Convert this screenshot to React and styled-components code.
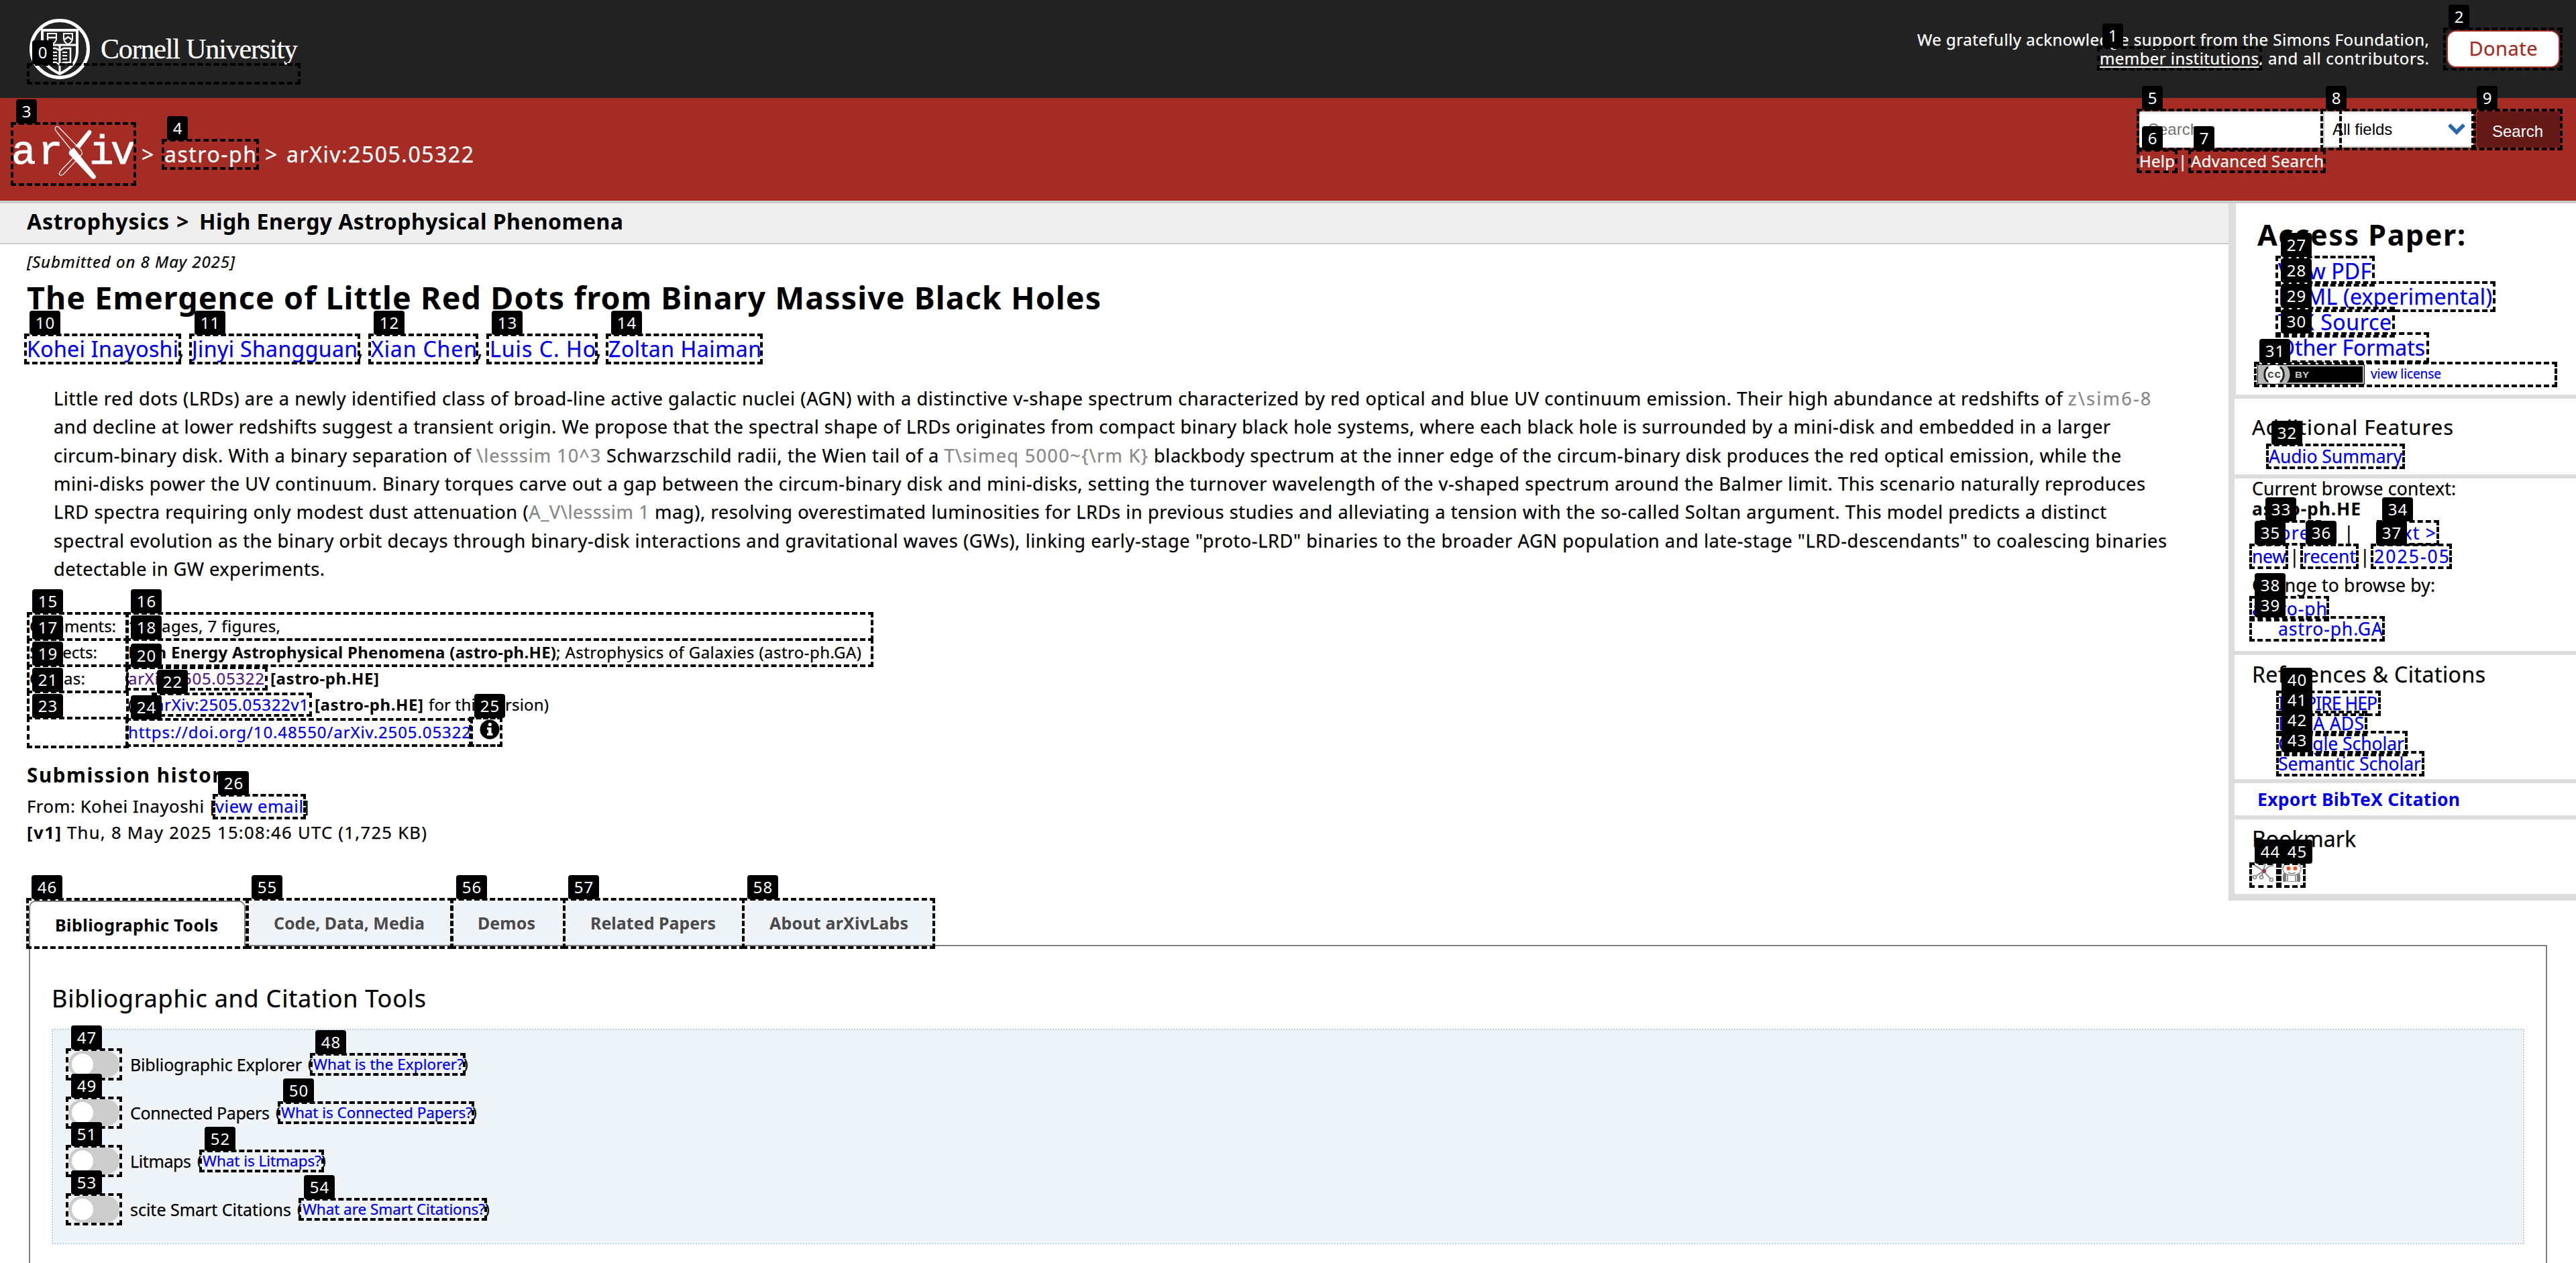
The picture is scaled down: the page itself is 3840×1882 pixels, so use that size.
import React, { useLayoutEffect, useRef, useState } from 'react';
import styled, { createGlobalStyle } from 'styled-components';

const Global = createGlobalStyle`
  * { box-sizing: border-box; }
  html, body { margin: 0; padding: 0; background: #fff; }
  body { font-family: "Noto Sans", "Open Sans", sans-serif; color: #000; overflow: hidden; }
`;

/* ---------- text ---------- */

const Run = styled.span`
  display: inline-block;
  flex: none;
  white-space: pre;
  margin-left: ${(p) => p.$ml || 0}px;
  font-weight: ${(p) => (p.$bold ? 700 : 'inherit')};
  color: ${(p) => p.$color || 'inherit'};
  text-decoration: ${(p) => (p.$underline ? 'underline' : 'none')};
  text-decoration-thickness: 2px;
  text-underline-offset: 3px;
  font-style: ${(p) => (p.$italic ? 'italic' : 'inherit')};
  -webkit-text-stroke: ${(p) => (p.$bold ? 0 : 0.25)}px currentColor;
`;

/* Text tracked so that it fills a given measure. */
function Fit({ w, ml, bold, color, underline, italic, children }) {
  const ref = useRef(null);
  const [tracking, setTracking] = useState(0);
  useLayoutEffect(() => {
    const el = ref.current;
    el.style.width = 'auto';
    el.style.letterSpacing = '0px';
    const plain = el.getBoundingClientRect().width;
    el.style.letterSpacing = '1px';
    const slope = Math.max(1, el.getBoundingClientRect().width - plain - 1);
    const next = (w - plain) / slope;
    el.style.width = `${w}px`;
    el.style.letterSpacing = `${next}px`;
    setTracking(next);
  }, [w]);
  return (
    <Run
      ref={ref}
      $ml={ml}
      $bold={bold}
      $color={color}
      $underline={underline}
      $italic={italic}
      style={{ width: w, letterSpacing: tracking }}
    >
      {children}
    </Run>
  );
}

const BLUE = '#0000ee';

const Line = styled.div`
  display: flex;
  margin-top: ${(p) => p.$gap || 0}px;
  padding-left: ${(p) => p.$indent || 0}px;
  height: ${(p) => p.$h}px;
  line-height: ${(p) => p.$h}px;
  font-size: ${(p) => p.$s}px;
`;

const Tex = styled.span`
  color: #888;
  letter-spacing: ${(p) => p.$track}px;
`;

/* ---------- page ---------- */

const Page = styled.div`
  position: relative;
  width: 3840px;
  height: 1882px;
  overflow: hidden;
  background: #fff;
`;

const TopBar = styled.header`
  display: flex;
  justify-content: space-between;
  align-items: center;
  height: 146px;
  padding: 0 24px 0 40px;
  background: #222;
  color: #fff;
`;

const CornellMark = styled.div`
  display: flex;
  align-items: center;
  font-family: "Liberation Serif", serif;
  font-size: 42px;
  line-height: 48px;
  padding-left: 3px;
`;

const Support = styled.div`
  display: flex;
  align-items: center;
  gap: 26px;
`;

const Thanks = styled.div`
  display: flex;
  flex-direction: column;
  align-items: flex-end;
`;

const ThanksLine = styled.div`
  display: flex;
  height: 28px;
  line-height: 28px;
  font-size: 24px;
`;

const Donate = styled.button`
  display: flex;
  align-items: center;
  justify-content: center;
  width: 169px;
  height: 56px;
  padding: 0 0 4px;
  border: 2px solid #a42c25;
  border-radius: 14px;
  background: #fff;
  color: #a42c25;
  font: inherit;
  font-size: 29px;
`;

const RedBar = styled.div`
  display: flex;
  justify-content: space-between;
  height: 157px;
  padding: 20px 24px 0 18px;
  background: #a42c25;
  border-bottom: 4px solid #ccc;
  color: #fff;
`;

const Crumbs = styled.div`
  display: flex;
  height: 100px;
  margin-top: 14px;
  font-size: 32px;
  line-height: 100px;
`;

const CrumbText = styled.div`
  display: flex;
`;

const SearchArea = styled.div`
  width: 627px;
  font-size: 24px;
`;

const SearchRow = styled.div`
  display: flex;
  height: 54px;
  font-family: "Liberation Sans", Arial, sans-serif;
`;

const Field = styled.div`
  width: 274px;
  padding-left: 13px;
  line-height: 53px;
  background: #fff;
  color: #757575;
  border-radius: 4px 0 0 4px;
  box-shadow: inset 0 3px 3px #e6e6e6;
`;

const Picker = styled.div`
  display: flex;
  align-items: center;
  justify-content: space-between;
  width: 224px;
  padding: 2px 12px 0 12px;
  line-height: 50px;
  background: #fff;
  color: #000;
  border-left: 2px solid #ccc;
  border-bottom: 2px solid #ccc;
  box-shadow: inset 0 3px 3px #e6e6e6;
`;

const SearchButton = styled.button`
  width: 124px;
  margin-left: 5px;
  padding: 6px 2px 0 0;
  border: 0;
  border-radius: 4px;
  background: #661a17;
  color: #fff;
  font: inherit;
`;

const Columns = styled.div`
  display: flex;
  height: 1039px;
`;

const Main = styled.main`
  width: 3322px;
`;

const Subject = styled.div`
  height: 61px;
  padding-left: 40px;
  background: #eee;
  border-bottom: 2px solid #ccc;
`;

const Article = styled.article`
  padding-left: 40px;
`;

const Abstract = styled.div`
  margin-top: 33px;
  padding-left: 40px;
`;

const MetaTable = styled.div`
  margin-top: 44px;
  padding-left: 4px;
`;

const MetaRow = styled.div`
  display: grid;
  grid-template-columns: 147px 1fr;
  height: ${(p) => p.$h}px;
  line-height: ${(p) => p.$h}px;
  font-size: 24px;
`;

const MetaCell = styled.div`
  display: flex;
`;

const Sidebar = styled.aside`
  width: 518px;
  background: #fff;
`;

const Section = styled.section`
  display: flow-root;
  height: ${(p) => p.$h}px;
  padding-left: ${(p) => (p.$wide ? 32 : 26)}px;
  border-left: ${(p) => (p.$wide ? 11 : 9)}px solid #ddd;
  border-bottom: ${(p) => p.$rule || 6}px solid #ddd;
`;

const LinkList = styled.div`
  margin-top: ${(p) => p.$gap}px;
  padding-left: ${(p) => p.$indent}px;
`;

const License = styled.div`
  display: flex;
  margin-top: 6px;
  height: 29px;
  line-height: 28px;
  font-size: 19px;
`;

const IconRow = styled.div`
  display: flex;
  gap: 11px;
  margin-top: 12px;
`;

/* ---------- labs ---------- */

const Labs = styled.div`
  margin: 0 43px;
`;

const Tabs = styled.div`
  display: flex;
  gap: 4px;
  height: 68px;
  border-bottom: 2px solid #808080;
  font-size: 25px;
`;

const Tab = styled.div`
  flex: none;
  display: flex;
  width: ${(p) => p.$w}px;
  height: ${(p) => (p.$active ? 68 : 66)}px;
  line-height: ${(p) => (p.$active ? 68 : 66)}px;
  padding-left: 37px;
  background: ${(p) => (p.$active ? '#fff' : '#eff4f9')};
  color: ${(p) => (p.$active ? '#000' : '#4a4a4a')};
  border: ${(p) => (p.$active ? '2px solid #808080' : '0')};
  border-bottom: 0;
  border-radius: 10px 10px 0 0;
  margin-right: ${(p) => (p.$active ? 1 : 0)}px;
`;

const Panel = styled.div`
  height: 520px;
  padding: 54px 32px 0;
  border: 2px solid #808080;
  border-top: 0;
`;

const ToolBox = styled.div`
  height: 321px;
  margin-top: 21px;
  padding: 15px 0 0 23px;
  border: 2px dotted #c5d5e0;
  background: #eff4f9;
`;

const ToolRow = styled.div`
  display: flex;
  align-items: center;
  height: 72px;
  line-height: 70px;
  font-size: 25px;
`;

const Small = styled.span`
  display: flex;
  font-size: 22.5px;
`;

const Toggle = styled.span`
  flex: none;
  width: 76px;
  height: 40px;
  padding: 4px 5px;
  margin-right: 16px;
  border-radius: 20px;
  background: #ccc;
  &::before {
    content: '';
    display: block;
    width: 32px;
    height: 32px;
    border-radius: 50%;
    background: #fff;
  }
`;

/* ---------- numbered element markers laid over the page ---------- */

const Outline = styled.div`
  position: absolute;
  left: ${(p) => p.$x}px;
  top: ${(p) => p.$y}px;
  width: ${(p) => p.$w}px;
  height: ${(p) => p.$h}px;
  border: 4px dashed #000;
`;

const Tag = styled.div`
  position: absolute;
  left: ${(p) => p.$x + 8}px;
  top: ${(p) => p.$y - 34}px;
  height: 36px;
  width: ${(p) => p.$w}px;
  text-align: center;
  line-height: 35px;
  font-size: 24px;
  letter-spacing: 1px;
  text-indent: 1px;
  background: #000;
  color: #fff;
  border-radius: 4px;
`;

const MARKS = [
  [40, 94, 448, 126], [3126, 69, 3372, 105], [3642, 41, 3820, 105], [16, 182, 203, 277],
  [241, 207, 386, 253], [3185, 162, 3491, 224], [3185, 222, 3246, 258], [3262, 222, 3467, 258],
  [3459, 162, 3691, 224], [3684, 162, 3820, 224], [36, 497, 270, 543], [282, 497, 537, 543],
  [549, 497, 713, 543], [725, 497, 891, 543], [903, 497, 1137, 543], [40, 912, 192, 955],
  [187, 912, 1302, 955], [40, 951, 192, 994], [187, 951, 1302, 994], [40, 990, 192, 1033],
  [187, 993, 399, 1029], [40, 1029, 192, 1072], [226, 1032, 465, 1068], [40, 1068, 192, 1115],
  [187, 1070, 705, 1113], [699, 1068, 749, 1113], [317, 1183, 456, 1221], [3392, 381, 3540, 427],
  [3392, 419, 3720, 465], [3392, 457, 3570, 503], [3392, 495, 3621, 541], [3360, 539, 3812, 577],
  [3378, 661, 3585, 699], [3369, 775, 3460, 813], [3543, 775, 3636, 813], [3353, 810, 3411, 848],
  [3429, 810, 3516, 848], [3534, 810, 3655, 848], [3353, 888, 3472, 926], [3353, 918, 3555, 956],
  [3393, 1029, 3549, 1067], [3393, 1059, 3529, 1097], [3393, 1089, 3589, 1127], [3393, 1119, 3614, 1157],
  [3353, 1285, 3401, 1323], [3393, 1285, 3437, 1323], [39, 1338, 370, 1414], [98, 1562, 182, 1610],
  [462, 1569, 694, 1603], [98, 1634, 182, 1682], [414, 1641, 707, 1675], [98, 1706, 182, 1754],
  [297, 1713, 483, 1747], [98, 1778, 182, 1826], [445, 1785, 726, 1819], [367, 1338, 675, 1414],
  [672, 1338, 843, 1414], [839, 1338, 1110, 1414], [1106, 1338, 1394, 1414],
];

function Markers() {
  return (
    <>
      {MARKS.map(([x, y, x2, y2], i) => (
        <Outline key={i} $x={x} $y={y} $w={x2 - x} $h={y2 - y} />
      ))}
      {MARKS.map(([x, y], i) => (
        <Tag key={i} $x={x} $y={y} $w={i > 9 ? 46 : 31}>
          {i}
        </Tag>
      ))}
    </>
  );
}

/* ---------- drawings ---------- */

const Seal = () => (
  <svg width="92" height="92" viewBox="0 0 92 92" fill="none" stroke="#fff">
    <circle cx="46" cy="46" r="42.5" strokeWidth="5" />
    <path d="M20 18H72V50C72 68 60 76 46 83C32 76 20 68 20 50Z" strokeWidth="4" />
    <path d="M20 40H72" strokeWidth="3" />
    <path d="M28 23H41V31C41 35 38 37 34.500 39C31 37 28 35 28 31ZM52 23H65V31C65 35 62 37 58.500 39C55 37 52 35 52 31Z" strokeWidth="2" />
    <path d="M28 29H41M53 32L58.500 28L64 32" strokeWidth="2.500" />
    <path d="M46 41V82" strokeWidth="3" />
    <path d="M30 45H40L46 48L52 45H62V66H52L46 69L40 66H30Z" strokeWidth="2.500" />
    <path d="M34 51H42M34 56H42M34 61H42M50 51H57M50 56H57M50 61H57" strokeWidth="2" />
  </svg>
);

const ArxivLogo = () => (
  <svg width="184" height="100" viewBox="18 178 184 100">
    <g fill="#fff" stroke="#fff" strokeWidth="0.900" fontFamily="Liberation Mono, monospace" fontSize="61">
      <text x="17" y="241.500">a</text>
      <text x="57" y="241.500">r</text>
      <text x="133" y="241.500">i</text>
      <text x="165" y="241.500">v</text>
    </g>
    <path d="M83 187.500C81 190 83 193 85 195L110 226L104 222L113 229L92 251C88 256 87 258 90 259C93 260 95 257 97 255L122 228C123 226 122 224 121 222L88 188C86 186 84 186 83 187.500Z" fill="none" stroke="#fff" strokeWidth="1.200" />
    <path d="M112 216L131 193C133 190 138 193 136 197L119 219Z" fill="#fff" />
    <path d="M104 223L110 218L142 259C145 263 140 267 136 263L105 230C102 227 102 225 104 223Z" fill="#fff" />
  </svg>
);

const Chevron = () => (
  <svg width="26" height="20" viewBox="0 0 26 20" fill="none" stroke="#2a67ab" strokeWidth="5.500">
    <path d="M2 3L13 14L24 3" />
  </svg>
);

const InfoIcon = styled.svg`
  width: 30px;
  height: 30px;
  margin-top: 3px;
`;

const Info = () => (
  <InfoIcon viewBox="0 0 30 30">
    <circle cx="15" cy="15" r="14.500" fill="#000" />
    <circle cx="15.300" cy="7.500" r="2.600" fill="#fff" />
    <path d="M11 12H17.500V20.500H19.500V24H11V20.500H13V15.500H11Z" fill="#fff" />
  </InfoIcon>
);

const CcBadge = () => (
  <svg width="160" height="30" viewBox="0 0 160 30">
    <rect width="160" height="30" fill="#000" />
    <rect x="2" y="2" width="156" height="26" fill="none" stroke="#bbb" strokeWidth="2" />
    <path d="M3 3H44C50 9 50 21 44 27H3Z" fill="#b3b8b0" />
    <circle cx="25" cy="15" r="14" fill="#fff" />
    <path d="M16 4C9 9 9 21 16 26M34 4C41 9 41 21 34 26" fill="none" stroke="#222" strokeWidth="3" />
    <text x="15" y="20" fontSize="17" fontWeight="700" fill="#444" fontFamily="Liberation Sans, sans-serif" textLength="20">cc</text>
    <text x="56" y="19.500" fontSize="13" fontWeight="700" fill="#ccc" fontFamily="Liberation Sans, sans-serif" textLength="21" lengthAdjust="spacingAndGlyphs">BY</text>
  </svg>
);

const BibSonomy = () => (
  <svg width="32" height="32" viewBox="0 0 32 32" fill="none" stroke="#999" strokeWidth="2.200">
    <path d="M17 16L2 6M17 16L20 3M17 16L28 7M17 16L5 24M17 16L14 24M17 16L28 28" />
    <circle cx="4" cy="25" r="2.500" />
    <circle cx="14" cy="25" r="2.500" />
    <circle cx="29" cy="29" r="2.500" />
    <circle cx="29" cy="6" r="2.500" />
    <circle cx="18" cy="16" r="3" fill="#a03060" stroke="none" />
  </svg>
);

const Reddit = () => (
  <svg width="34" height="32" viewBox="0 0 34 32">
    <path d="M7 18C5 22 5 27 6 32M25 18C27 22 27 27 26 32" stroke="#777" strokeWidth="5" fill="none" />
    <path d="M10 20V32H22V20" fill="#fff" stroke="#999" strokeWidth="2" />
    <circle cx="4" cy="8" r="3.500" fill="#ddd" stroke="#999" />
    <circle cx="30" cy="8" r="3.500" fill="#ddd" stroke="#999" />
    <ellipse cx="16.500" cy="13" rx="13.500" ry="9.500" fill="#fff" stroke="#999" strokeWidth="1.500" />
    <circle cx="11.500" cy="12" r="3" fill="#f0542a" />
    <circle cx="21.500" cy="12" r="3" fill="#f0542a" />
    <path d="M11 18Q16.500 22 22 18" stroke="#999" strokeWidth="2" fill="none" />
  </svg>
);

/* ---------- data ---------- */

const AUTHORS = [
  ['Kohei Inayoshi', 226, 0], ['Jinyi Shangguan', 247, 12], ['Xian Chen', 158, 12],
  ['Luis C. Ho', 158, 11], ['Zoltan Haiman', 228, 11],
];

const ABSTRACT = [
  [3128, <>Little red dots (LRDs) are a newly identified class of broad-line active galactic nuclei (AGN) with a distinctive v-shape spectrum characterized by red optical and blue UV continuum emission. Their high abundance at redshifts of <Tex $track={2.2}>z\sim6-8</Tex></>],
  [3066, 'and decline at lower redshifts suggest a transient origin. We propose that the spectral shape of LRDs originates from compact binary black hole systems, where each black hole is surrounded by a mini-disk and embedded in a larger'],
  [3082, <>circum-binary disk. With a binary separation of <Tex $track={1}>\lesssim 10^3</Tex> Schwarzschild radii, the Wien tail of a <Tex $track={1.3}>{'T\\simeq 5000~{\\rm K}'}</Tex> blackbody spectrum at the inner edge of the circum-binary disk produces the red optical emission, while the</>],
  [3118, 'mini-disks power the UV continuum. Binary torques carve out a gap between the circum-binary disk and mini-disks, setting the turnover wavelength of the v-shaped spectrum around the Balmer limit. This scenario naturally reproduces'],
  [3060, <>LRD spectra requiring only modest dust attenuation (<Tex $track={0.6}>A_V\lesssim 1</Tex> mag), resolving overestimated luminosities for LRDs in previous studies and alleviating a tension with the so-called Soltan argument. This model predicts a distinct</>],
  [3150, 'spectral evolution as the binary orbit decays through binary-disk interactions and gravitational waves (GWs), linking early-stage "proto-LRD" binaries to the broader AGN population and late-stage "LRD-descendants" to coalescing binaries'],
  [404, 'detectable in GW experiments.'],
];

const TABS = [
  ['Bibliographic Tools', 323, 243], ['Code, Data, Media', 300, 225], ['Demos', 164, 86],
  ['Related Papers', 263, 187], ['About arXivLabs', 280, 207],
];

const TOOLS = [
  ['Bibliographic Explorer', 256, 'What is the Explorer?', 224],
  ['Connected Papers', 208, 'What is Connected Papers?', 285],
  ['Litmaps', 91, 'What is Litmaps?', 177],
  ['scite Smart Citations', 240, 'What are Smart Citations?', 272],
];

const ACCESS = [['View PDF', 139], ['HTML (experimental)', 319], ['TeX Source', 169], ['Other Formats', 219]];
const REFS = [['INSPIRE HEP', 148], ['NASA ADS', 128], ['Google Scholar', 188], ['Semantic Scholar', 213]];

/* ---------- app ---------- */

export default function App() {
  return (
    <Page>
      <Global />
      <TopBar>
        <CornellMark>
          <Seal />
          <Fit ml={15} w={294}>Cornell University</Fit>
        </CornellMark>
        <Support>
          <Thanks>
            <ThanksLine><Fit w={763}>We gratefully acknowledge support from the Simons Foundation,</Fit></ThanksLine>
            <ThanksLine>
              <Fit w={237} underline>member institutions</Fit>
              <Fit w={254}>, and all contributors.</Fit>
            </ThanksLine>
          </Thanks>
          <Donate><Fit w={102}>Donate</Fit></Donate>
        </Support>
      </TopBar>

      <RedBar>
        <Crumbs>
          <ArxivLogo />
          <CrumbText>
            <Fit ml={9} w={22}>{'>'}</Fit>
            <Fit ml={12} w={137}>astro-ph</Fit>
            <Fit ml={13} w={22}>{'>'}</Fit>
            <Fit ml={10} w={279}>arXiv:2505.05322</Fit>
          </CrumbText>
        </Crumbs>
        <SearchArea>
          <SearchRow>
            <Field>Search</Field>
            <Picker>All fields<Chevron /></Picker>
            <SearchButton>Search</SearchButton>
          </SearchRow>
          <Line $gap={4} $h={32} $s={24}>
            <Fit w={53}>Help</Fit>
            <Fit ml={5} w={12}>|</Fit>
            <Fit ml={7} w={198}>Advanced Search</Fit>
          </Line>
        </SearchArea>
      </RedBar>

      <Columns>
        <Main>
          <Subject>
            <Line $h={53} $s={32}>
              <Fit bold w={212}>Astrophysics</Fit>
              <Fit bold ml={11} w={24}>{'>'}</Fit>
              <Fit bold ml={10} w={632}>High Energy Astrophysical Phenomena</Fit>
            </Line>
          </Subject>
          <Article>
            <Line $gap={11} $h={30} $s={24}><Fit italic w={310}>[Submitted on 8 May 2025]</Fit></Line>
            <Line $gap={10} $h={56} $s={46.5}>
              <Fit bold w={1601}>The Emergence of Little Red Dots from Binary Massive Black Holes</Fit>
            </Line>
            <Line $gap={29} $h={40} $s={32}>
              {AUTHORS.map(([name, w, ml], i) => (
                <React.Fragment key={name}>
                  <Fit color={BLUE} w={w} ml={ml}>{name}</Fit>
                  {i < 4 && <Fit w={8}>,</Fit>}
                </React.Fragment>
              ))}
            </Line>
            <Abstract>
              {ABSTRACT.map(([w, text], i) => (
                <Line key={i} $h={42.35} $s={27.2}><Fit w={w}>{text}</Fit></Line>
              ))}
            </Abstract>
            <MetaTable>
              <MetaRow $h={39}>
                <MetaCell><Fit w={129}>Comments:</Fit></MetaCell>
                <MetaCell><Fit w={227}>13 pages, 7 figures,</Fit></MetaCell>
              </MetaRow>
              <MetaRow $h={39}>
                <MetaCell><Fit w={101}>Subjects:</Fit></MetaCell>
                <MetaCell>
                  <Fit bold w={638}>High Energy Astrophysical Phenomena (astro-ph.HE)</Fit>
                  <Fit w={455}>; Astrophysics of Galaxies (astro-ph.GA)</Fit>
                </MetaCell>
              </MetaRow>
              <MetaRow $h={39}>
                <MetaCell><Fit w={83}>Cite as:</Fit></MetaCell>
                <MetaCell>
                  <Fit color="#551a8b" w={203}>arXiv:2505.05322</Fit>
                  <Fit bold ml={9} w={162}>[astro-ph.HE]</Fit>
                </MetaCell>
              </MetaRow>
              <MetaRow $h={39}>
                <MetaCell />
                <MetaCell>
                  <Fit w={32}>(or</Fit>
                  <Fit color={BLUE} ml={8} w={229}>arXiv:2505.05322v1</Fit>
                  <Fit bold ml={9} w={162}>[astro-ph.HE]</Fit>
                  <Fit ml={8} w={179}>for this version)</Fit>
                </MetaCell>
              </MetaRow>
              <MetaRow $h={43}>
                <MetaCell />
                <MetaCell>
                  <Fit color={BLUE} w={511}>https://doi.org/10.48550/arXiv.2505.05322</Fit>
                  <Fit w={13}> </Fit>
                  <Info />
                </MetaCell>
              </MetaRow>
            </MetaTable>
            <Line $gap={25} $h={36} $s={29.5}><Fit bold w={308}>Submission history</Fit></Line>
            <Line $gap={10} $h={38} $s={25.6}>
              <Fit w={264}>From: Kohei Inayoshi</Fit>
              <Fit ml={9} w={8}>[</Fit>
              <Fit color={BLUE} w={131}>view email</Fit>
              <Fit w={8}>]</Fit>
            </Line>
            <Line $gap={1} $h={38} $s={25.6}>
              <Fit bold w={51}>[v1]</Fit>
              <Fit ml={9} w={536}>Thu, 8 May 2025 15:08:46 UTC (1,725 KB)</Fit>
            </Line>
          </Article>
        </Main>

        <Sidebar>
          <Section $wide $h={291}>
            <Line $gap={17} $h={60} $s={43}><Fit bold w={310}>Access Paper:</Fit></Line>
            <LinkList $gap={5} $indent={31}>
              {ACCESS.map(([t, w]) => (
                <Line key={t} $h={38} $s={32}><Fit color={BLUE} w={w}>{t}</Fit></Line>
              ))}
            </LinkList>
            <License>
              <CcBadge />
              <Fit color={BLUE} ml={9} w={105}>view license</Fit>
            </License>
          </Section>
          <Section $h={119}>
            <Line $gap={24} $h={36} $s={31}><Fit w={300}>Additional Features</Fit></Line>
            <Line $gap={8} $indent={25} $h={36} $s={26.5}><Fit color={BLUE} w={199}>Audio Summary</Fit></Line>
          </Section>
          <Section $h={263}>
            <Line $gap={1} $h={29.5} $s={26.5}><Fit w={304}>Current browse context:</Fit></Line>
            <Line $h={29.5} $s={26.5}><Fit bold w={162}>astro-ph.HE</Fit></Line>
            <Line $gap={4} $indent={16} $h={35} $s={26.5}>
              <Fit color={BLUE} w={84}>{'< prev'}</Fit>
              <Fit ml={37} w={12}>|</Fit>
              <Fit color={BLUE} ml={42} w={83}>{'next >'}</Fit>
            </Line>
            <Line $h={35} $s={26.5}>
              <Fit color={BLUE} w={51}>new</Fit>
              <Fit ml={5} w={12}>|</Fit>
              <Fit color={BLUE} ml={8} w={79}>recent</Fit>
              <Fit ml={6} w={12}>|</Fit>
              <Fit color={BLUE} ml={9} w={112}>2025-05</Fit>
            </Line>
            <Line $gap={8} $h={35} $s={26.5}><Fit w={273}>Change to browse by:</Fit></Line>
            <Line $gap={2} $h={30} $s={26.5}><Fit color={BLUE} w={112}>astro-ph</Fit></Line>
            <Line $indent={39} $h={30} $s={26.5}><Fit color={BLUE} w={156}>astro-ph.GA</Fit></Line>
          </Section>
          <Section $h={191}>
            <Line $gap={9} $h={40} $s={32}><Fit w={348}>References & Citations</Fit></Line>
            <LinkList $gap={8} $indent={39}>
              {REFS.map(([t, w]) => (
                <Line key={t} $h={30} $s={26.5}><Fit color={BLUE} w={w}>{t}</Fit></Line>
              ))}
            </LinkList>
          </Section>
          <Section $h={54}>
            <Line $indent={8} $h={48} $s={26.5}><Fit bold color={BLUE} w={302}>Export BibTeX Citation</Fit></Line>
          </Section>
          <Section $h={121} $rule={10}>
            <Line $gap={9} $h={40} $s={32}><Fit w={155}>Bookmark</Fit></Line>
            <IconRow><BibSonomy /><Reddit /></IconRow>
          </Section>
        </Sidebar>
      </Columns>

      <Labs>
        <Tabs>
          {TABS.map(([t, w, tw], i) => (
            <Tab key={t} $w={w} $active={i === 0}><Fit bold w={tw}>{t}</Fit></Tab>
          ))}
        </Tabs>
        <Panel>
          <Line $h={48} $s={36}><Fit w={558}>Bibliographic and Citation Tools</Fit></Line>
          <ToolBox>
            {TOOLS.map(([t, w, link, lw]) => (
              <ToolRow key={t}>
                <Toggle />
                <Fit w={w}>{t}</Fit>
                <Small>
                  <Fit ml={9} w={8}>(</Fit>
                  <Fit color={BLUE} w={lw}>{link}</Fit>
                  <Fit w={8}>)</Fit>
                </Small>
              </ToolRow>
            ))}
          </ToolBox>
        </Panel>
      </Labs>
      <Markers />
    </Page>
  );
}
